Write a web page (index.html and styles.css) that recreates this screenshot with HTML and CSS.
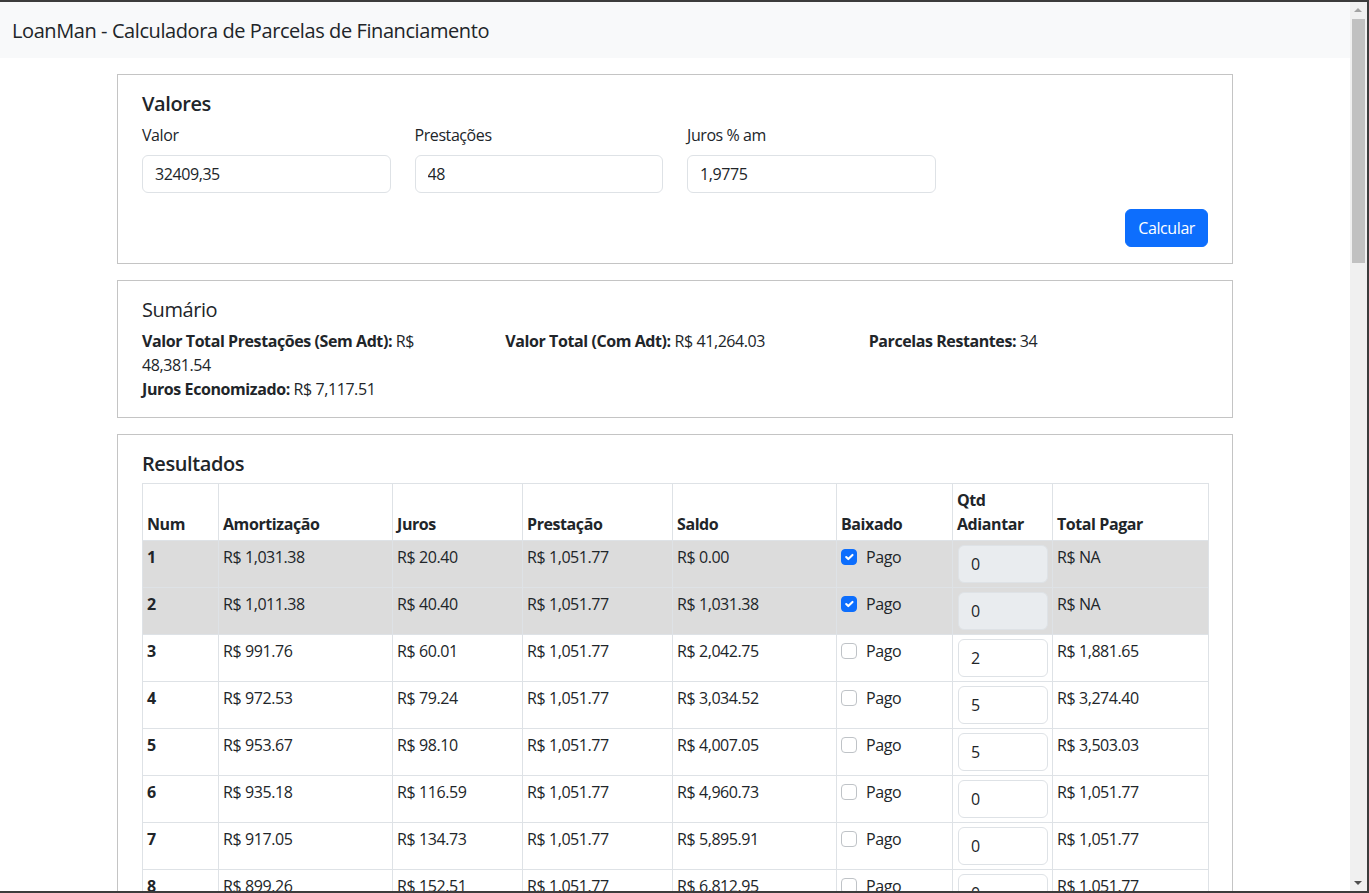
FILE: index.html
```html
<!DOCTYPE html>
<html lang="pt-BR">
<head>
<meta charset="utf-8">
<title>LoanMan</title>
<link rel="stylesheet" href="styles.css">
</head>
<body>
<div class="frame">
  <div class="page">
    <nav class="navbar"><span class="brand">LoanMan - Calculadora de Parcelas de Financiamento</span></nav>
    <main class="container">
      <section class="card">
        <h5 class="card-title strong">Valores</h5>
        <div class="row row-4">
          <div class="field"><label class="form-label">Valor</label><input class="form-control" value="32409,35"></div>
          <div class="field"><label class="form-label">Prestações</label><input class="form-control" value="48"></div>
          <div class="field"><label class="form-label">Juros % am</label><input class="form-control" value="1,9775"></div>
        </div>
        <div class="actions"><button class="btn">Calcular</button></div>
      </section>

      <section class="card">
        <h5 class="card-title">Sumário</h5>
        <div class="row row-3">
          <div><b>Valor Total Prestações (Sem Adt):</b> R$ 48,381.54</div>
          <div><b>Valor Total (Com Adt):</b> R$ 41,264.03</div>
          <div><b>Parcelas Restantes:</b> 34</div>
          <div><b>Juros Economizado:</b> R$ 7,117.51</div>
        </div>
      </section>

      <section class="card">
        <h5 class="card-title strong">Resultados</h5>
        <table class="table">
          <colgroup>
            <col style="width:76px"><col style="width:174px"><col style="width:130px"><col style="width:150px"><col style="width:164px"><col style="width:116px"><col style="width:100px"><col style="width:156px">
          </colgroup>
          <thead>
            <tr><th>Num</th><th>Amortização</th><th>Juros</th><th>Prestação</th><th>Saldo</th><th>Baixado</th><th>Qtd<br>Adiantar</th><th>Total Pagar</th></tr>
          </thead>
          <tbody>
            <tr class="paid"><th>1</th><td>R$ 1,031.38</td><td>R$ 20.40</td><td>R$ 1,051.77</td><td>R$ 0.00</td><td><label class="check"><input type="checkbox" checked><span>Pago</span></label></td><td><input class="form-control sm" value="0" disabled></td><td>R$ NA</td></tr>
            <tr class="paid"><th>2</th><td>R$ 1,011.38</td><td>R$ 40.40</td><td>R$ 1,051.77</td><td>R$ 1,031.38</td><td><label class="check"><input type="checkbox" checked><span>Pago</span></label></td><td><input class="form-control sm" value="0" disabled></td><td>R$ NA</td></tr>
            <tr><th>3</th><td>R$ 991.76</td><td>R$ 60.01</td><td>R$ 1,051.77</td><td>R$ 2,042.75</td><td><label class="check"><input type="checkbox"><span>Pago</span></label></td><td><input class="form-control sm" value="2"></td><td>R$ 1,881.65</td></tr>
            <tr><th>4</th><td>R$ 972.53</td><td>R$ 79.24</td><td>R$ 1,051.77</td><td>R$ 3,034.52</td><td><label class="check"><input type="checkbox"><span>Pago</span></label></td><td><input class="form-control sm" value="5"></td><td>R$ 3,274.40</td></tr>
            <tr><th>5</th><td>R$ 953.67</td><td>R$ 98.10</td><td>R$ 1,051.77</td><td>R$ 4,007.05</td><td><label class="check"><input type="checkbox"><span>Pago</span></label></td><td><input class="form-control sm" value="5"></td><td>R$ 3,503.03</td></tr>
            <tr><th>6</th><td>R$ 935.18</td><td>R$ 116.59</td><td>R$ 1,051.77</td><td>R$ 4,960.73</td><td><label class="check"><input type="checkbox"><span>Pago</span></label></td><td><input class="form-control sm" value="0"></td><td>R$ 1,051.77</td></tr>
            <tr><th>7</th><td>R$ 917.05</td><td>R$ 134.73</td><td>R$ 1,051.77</td><td>R$ 5,895.91</td><td><label class="check"><input type="checkbox"><span>Pago</span></label></td><td><input class="form-control sm" value="0"></td><td>R$ 1,051.77</td></tr>
            <tr><th>8</th><td>R$ 899.26</td><td>R$ 152.51</td><td>R$ 1,051.77</td><td>R$ 6,812.95</td><td><label class="check"><input type="checkbox"><span>Pago</span></label></td><td><input class="form-control sm" value="0"></td><td>R$ 1,051.77</td></tr>
            <tr><th>9</th><td>R$ 881.82</td><td>R$ 169.95</td><td>R$ 1,051.77</td><td>R$ 7,712.21</td><td><label class="check"><input type="checkbox"><span>Pago</span></label></td><td><input class="form-control sm" value="0"></td><td>R$ 1,051.77</td></tr>
          </tbody>
        </table>
      </section>
    </main>
  </div>
  <div class="scrollbar" aria-hidden="true">
    <div class="sb-arrow up"></div>
    <div class="sb-thumb"></div>
    <div class="sb-arrow down"></div>
  </div>
</div>
</body>
</html>
```

FILE: styles.css
```css
* { box-sizing: border-box; }
html, body { margin: 0; padding: 0; height: 100%; overflow: hidden; }
body {
  font-family: "Open Sans", "Noto Sans", sans-serif;
  font-size: 16px;
  line-height: 1.5;
  letter-spacing: -0.026em;
  color: #212529;
  background: #fff;
}
.frame {
  height: 893px;
  display: flex;
  border-top: 2px solid #3c3c3c;
  border-right: 2px solid #3c3c3c;
  border-bottom: 2px solid #3c3c3c;
  overflow: hidden;
}
.page { flex: 1; min-width: 0; overflow: hidden; }
.scrollbar {
  width: 17px;
  background: #f0f0f0;
  display: flex;
  flex-direction: column;
  align-items: center;
}
.sb-arrow { height: 17px; width: 100%; position: relative; }
.sb-arrow::after {
  content: ""; position: absolute; left: 4px; top: 6px;
  border-left: 4px solid transparent; border-right: 4px solid transparent;
}
.sb-arrow.up::after { border-bottom: 4px solid #a3a3a3; }
.sb-arrow.down { margin-top: auto; }
.sb-arrow.down::after { border-top: 4px solid #505050; top: 7px; }
.sb-thumb { width: 13px; height: 244px; background: #c1c1c1; }

.navbar { background: #f8f9fa; height: 56px; padding: 8px 12px; }
.brand { display: block; font-size: 20px; line-height: 30px; padding: 6px 0 4px; }

.container { width: 1140px; margin: 0 auto; padding: 16px 12px 0; }
.card { border: 1px solid #c4c4c4; padding: 16px 24px; margin-bottom: 16px; }
.card-title { margin: 0 0 7px; padding-top: 1px; font-size: 20px; line-height: 24px; font-weight: 400; }
.card-title.strong { font-weight: 600; }

.row { display: grid; column-gap: 24px; }
.row-4 { grid-template-columns: repeat(4, 1fr); }
.row-3 { grid-template-columns: repeat(3, 1fr); }
.row b { font-weight: 700; }
.form-label { display: block; margin-bottom: 8px; padding-top: 1px; line-height: 23px; }
.form-control {
  display: block; width: 100%; height: 38px;
  padding: 6px 12px; font: inherit; letter-spacing: inherit; line-height: 24px; color: #212529;
  background: #fff; border: 1px solid #dee2e6; border-radius: 6px;
}
.form-control:disabled { background: #e9ecef; }
.actions { display: flex; justify-content: flex-end; margin-top: 16px; }
.btn {
  font: inherit; letter-spacing: inherit; line-height: 24px; color: #fff; background: #0d6efd;
  border: 1px solid #0d6efd; border-radius: 6px; padding: 6px 12px; height: 38px;
}

.table { width: 1066px; border-collapse: collapse; table-layout: fixed; }
.table th, .table td {
  border: 1px solid #dee2e6; padding: 4px 4px; text-align: left; vertical-align: top; font-weight: 400;
}
.table th { font-weight: 700; }
.table thead th { vertical-align: bottom; }
.table tr.paid th, .table tr.paid td { background: #dcdcdc; }
.check { display: flex; align-items: flex-start; gap: 9px; }
.check input {
  appearance: none; -webkit-appearance: none; margin: 4px 0 0; width: 16px; height: 16px;
  border: 1px solid #bfc3c7; border-radius: 4px; background: #fff;
}
.check input:checked {
  background: #0d6efd; border-color: #0d6efd;
  background-image: url("data:image/svg+xml,%3csvg xmlns='http://www.w3.org/2000/svg' viewBox='0 0 20 20'%3e%3cpath fill='none' stroke='%23fff' stroke-linecap='round' stroke-linejoin='round' stroke-width='3' d='m6 10 3 3 6-6'/%3e%3c/svg%3e");
}
.form-control.sm { width: 90px; margin-left: 1px; }
```
